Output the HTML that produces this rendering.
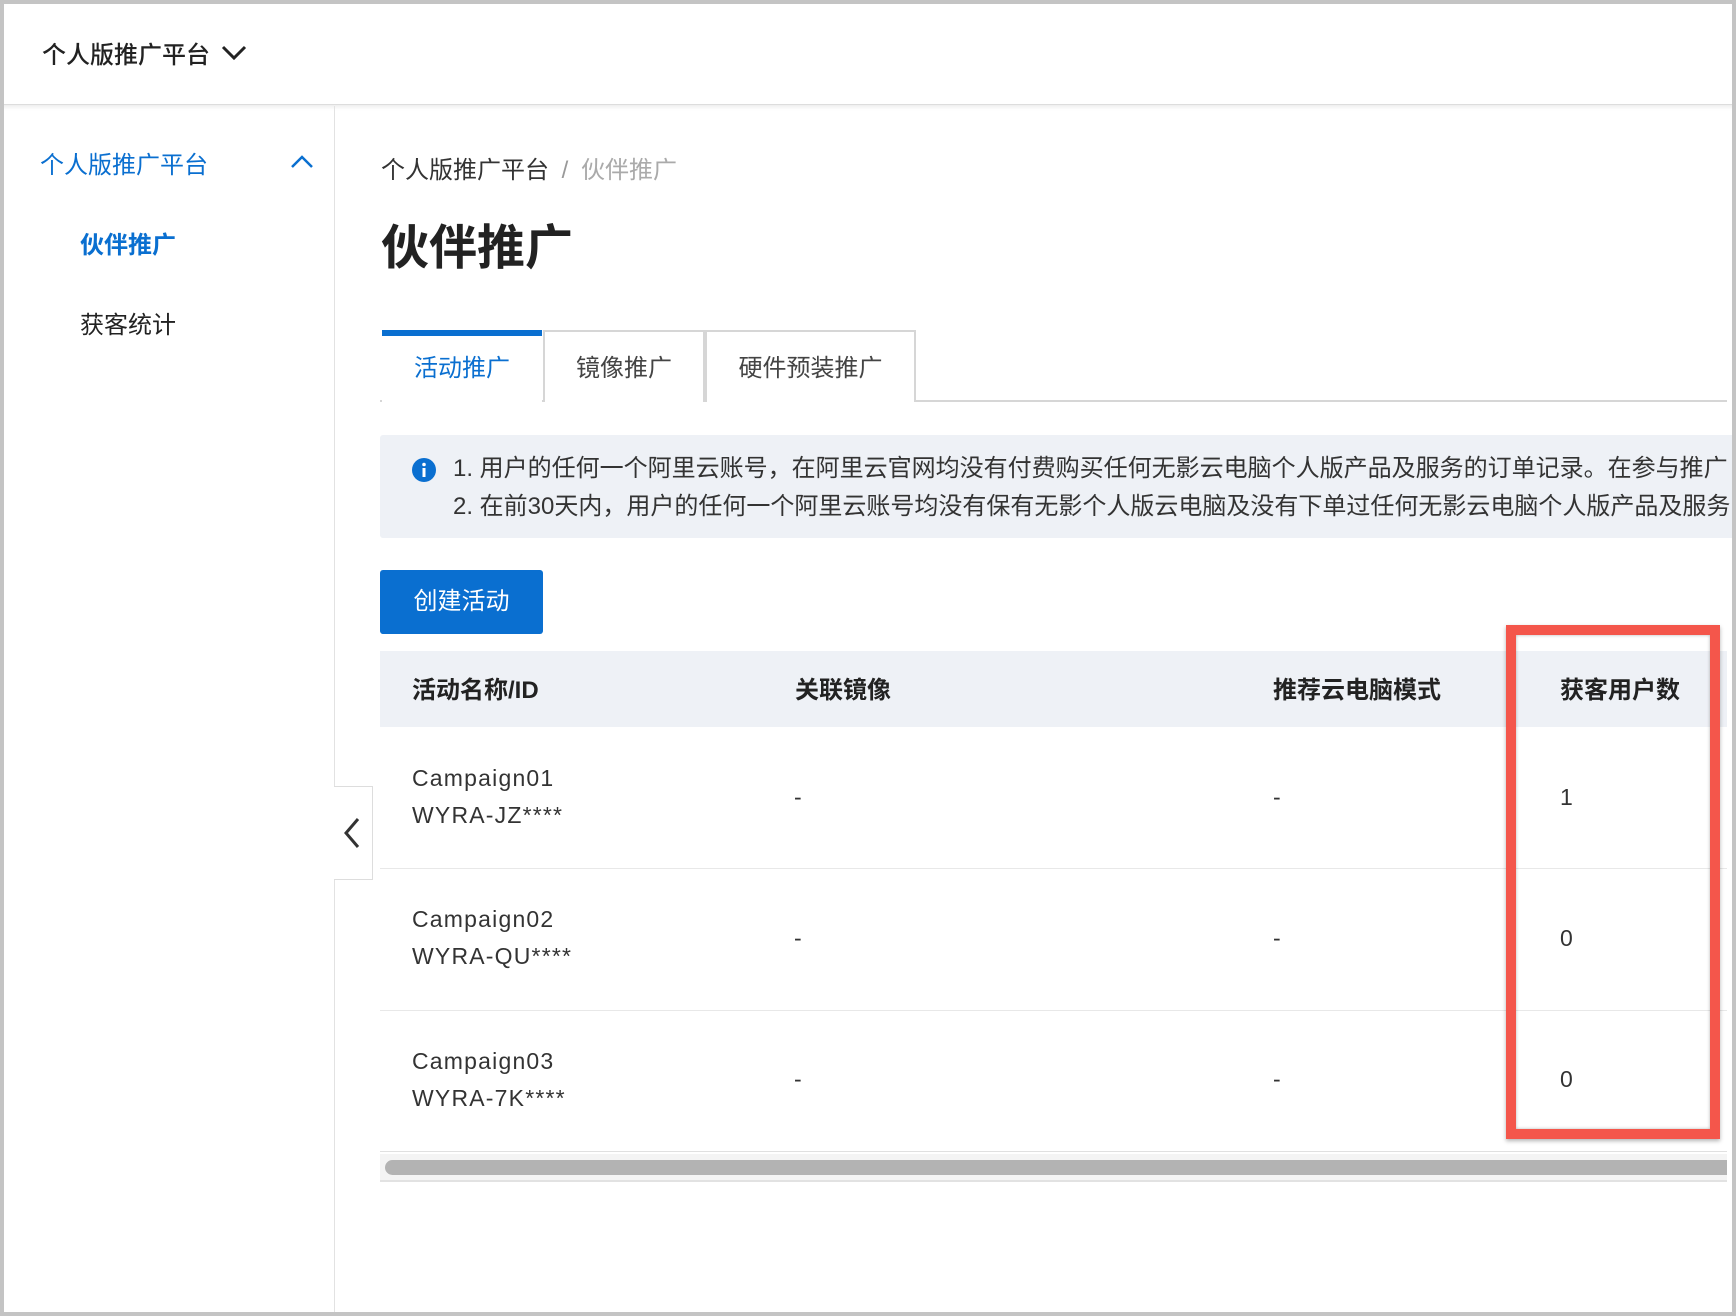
<!DOCTYPE html>
<html><head><meta charset="utf-8"><style>
*{margin:0;padding:0;box-sizing:border-box}
body{width:1736px;height:1316px;overflow:hidden;background:#fff;font-family:"Liberation Sans","Noto Sans CJK SC",sans-serif;color:#333;position:relative}
.abs{position:absolute;white-space:nowrap}
.frame{position:absolute;left:0;top:0;width:1736px;height:1316px;border:4px solid #c4c4c4;pointer-events:none;z-index:10}
</style></head><body>
<div class="abs" style="left:0;top:0;width:1736px;height:105px;background:#fff;border-bottom:1px solid #ddd;box-shadow:0 2px 4px rgba(0,0,0,.08)"></div>
<div class="abs" style="left:42px;top:35px;font-size:24px;color:#222;font-weight:500">个人版推广平台</div>
<svg class="abs" style="left:220px;top:44px" width="28" height="18"><path d="M3 3 L14 14 L25 3" stroke="#222" stroke-width="3" fill="none"/></svg>

<div class="abs" style="left:334px;top:106px;width:1px;height:1210px;background:#e2e2e2"></div>
<div class="abs" style="left:40px;top:145px;font-size:24px;color:#0a6fd0">个人版推广平台</div>
<svg class="abs" style="left:290px;top:154px" width="24" height="16"><path d="M2 13 L12 3 L22 13" stroke="#0a6fd0" stroke-width="2.5" fill="none"/></svg>
<div class="abs" style="left:80px;top:225px;font-size:24px;color:#0a6fd0;font-weight:bold">伙伴推广</div>
<div class="abs" style="left:80px;top:305px;font-size:24px;color:#222">获客统计</div>

<div class="abs" style="left:334px;top:786px;width:39px;height:94px;border:1px solid #ddd;border-left:none;background:#fff"></div>
<svg class="abs" style="left:342px;top:816px" width="20" height="34"><path d="M16 3 L4 17 L16 31" stroke="#333" stroke-width="3" fill="none"/></svg>

<div class="abs" style="left:381px;top:150px;font-size:24px;color:#333">个人版推广平台 <span style="color:#999;margin:0 6px">/</span> <span style="color:#aaa">伙伴推广</span></div>
<div class="abs" style="left:381px;top:208px;font-size:48px;font-weight:bold;color:#222">伙伴推广</div>

<div class="abs" style="left:380px;top:400px;width:1347px;height:2px;background:#d6d6d6"></div>
<div class="abs" style="left:382px;top:330px;width:160px;height:72px;background:#fff;border-top:6px solid #0a6fd0"></div>
<div class="abs" style="left:382px;top:348px;width:160px;text-align:center;font-size:24px;color:#0a6fd0">活动推广</div>
<div class="abs" style="left:543px;top:330px;width:162px;height:72px;border:2px solid #d6d6d6;border-bottom:none;background:#fff;text-align:center;padding-top:16px;font-size:24px;color:#444">镜像推广</div>
<div class="abs" style="left:705px;top:330px;width:211px;height:72px;border:2px solid #d6d6d6;border-bottom:none;background:#fff;text-align:center;padding-top:16px;font-size:24px;color:#444">硬件预装推广</div>

<div class="abs" style="left:380px;top:435px;width:1356px;height:103px;background:#eef1f6;border-radius:3px"></div>
<svg class="abs" style="left:412px;top:458px" width="24" height="24"><circle cx="12" cy="12" r="12" fill="#0a6fd0"/><rect x="10.5" y="10" width="3" height="9" fill="#fff"/><circle cx="12" cy="6.5" r="1.8" fill="#fff"/></svg>
<div class="abs" style="left:453px;top:450px;font-size:24px;line-height:38px;color:#333">1. 用户的任何一个阿里云账号，在阿里云官网均没有付费购买任何无影云电脑个人版产品及服务的订单记录。在参与推广<br>2. 在前30天内，用户的任何一个阿里云账号均没有保有无影个人版云电脑及没有下单过任何无影云电脑个人版产品及服务</div>

<div class="abs" style="left:380px;top:570px;width:163px;height:64px;background:#0a6fd0;border-radius:3px;color:#fff;font-size:24px;text-align:center;line-height:64px">创建活动</div>

<div class="abs" style="left:380px;top:651px;width:1347px;height:76px;background:#eef1f6"></div>
<div class="abs" style="left:412px;top:670px;font-size:24px;font-weight:bold;color:#222">活动名称/ID</div>
<div class="abs" style="left:795px;top:670px;font-size:24px;font-weight:bold;color:#222">关联镜像</div>
<div class="abs" style="left:1273px;top:670px;font-size:24px;font-weight:bold;color:#222">推荐云电脑模式</div>
<div class="abs" style="left:1560px;top:670px;font-size:24px;font-weight:bold;color:#222">获客用户数</div>

<div class="abs" style="left:380px;top:868px;width:1347px;height:1px;background:#e8e8e8"></div>
<div class="abs" style="left:380px;top:1010px;width:1347px;height:1px;background:#e8e8e8"></div>
<div class="abs" style="left:380px;top:1151px;width:1347px;height:1px;background:#e0e0e0"></div>

<div class="abs" style="left:412px;top:760px;font-size:23px;line-height:37px;letter-spacing:1.2px">Campaign01<br>WYRA-JZ****</div>
<div class="abs" style="left:794px;top:784px;font-size:23px">-</div>
<div class="abs" style="left:1273px;top:784px;font-size:23px">-</div>
<div class="abs" style="left:1560px;top:784px;font-size:23px">1</div>

<div class="abs" style="left:412px;top:901px;font-size:23px;line-height:37px;letter-spacing:1.2px">Campaign02<br>WYRA-QU****</div>
<div class="abs" style="left:794px;top:925px;font-size:23px">-</div>
<div class="abs" style="left:1273px;top:925px;font-size:23px">-</div>
<div class="abs" style="left:1560px;top:925px;font-size:23px">0</div>

<div class="abs" style="left:412px;top:1043px;font-size:23px;line-height:37px;letter-spacing:1.2px">Campaign03<br>WYRA-7K****</div>
<div class="abs" style="left:794px;top:1066px;font-size:23px">-</div>
<div class="abs" style="left:1273px;top:1066px;font-size:23px">-</div>
<div class="abs" style="left:1560px;top:1066px;font-size:23px">0</div>

<div class="abs" style="left:380px;top:1154px;width:1347px;height:28px;background:#f4f4f4;border-bottom:2px solid #e2e2e2"></div>
<div class="abs" style="left:385px;top:1160px;width:1342px;height:15px;background:#b3b3b3;border-radius:8px 0 0 8px"></div>

<div class="abs" style="left:1506px;top:625px;width:214px;height:514px;border:10px solid #f4564b;box-shadow:0 2px 4px rgba(0,0,0,.3), inset 0 0 3px rgba(0,0,0,.3)"></div>

<div class="frame"></div>
</body></html>
